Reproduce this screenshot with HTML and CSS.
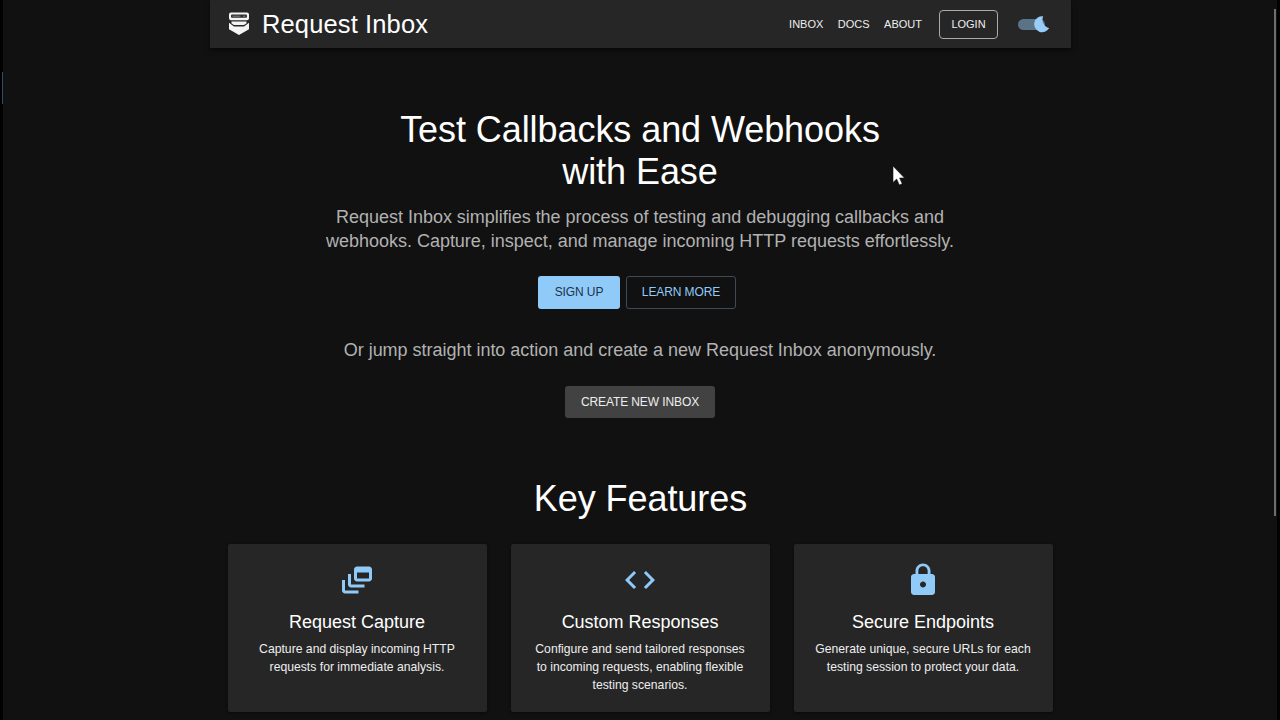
FILE: index.html
```html
<!DOCTYPE html>
<html lang="en">
<head>
    <meta charset="UTF-8">
    <meta name="viewport" content="width=device-width, initial-scale=1.0">
    <title>Request Inbox</title>
    <link rel="stylesheet" href="styles.css">
</head>
<body>
    <div class="container">
        <header class="navbar">
            <svg class="logo" viewBox="0 0 22 24">
                <path fill="#f4f4f4" d="M3 .5h16a2 2 0 0 1 2 2v3.700a2 2 0 0 1-2 2H3a2 2 0 0 1-2-2V2.500a2 2 0 0 1 2-2z"/>
                <rect x="3" y="2.600" width="16" height="3.200" rx="1" fill="#2b2b2b"/>
                <path stroke="#999" stroke-width=".8" d="M4.500 4.200h8M15 4.200h2.500"/>
                <path fill="#f4f4f4" d="M3.500 9.600h15v1.800c-1 .3-1.500 1.500-3 1.500h-9c-1.500 0-2-1.200-3-1.500z"/>
                <path fill="#f4f4f4" d="M1 10.800l5 3.700h10l5-3.700v6.400l-10 5.900-10-5.900z"/>
            </svg>
            <span class="brand">Request Inbox</span>
            <nav class="links">
                <a>INBOX</a>
                <a>DOCS</a>
                <a>ABOUT</a>
            </nav>
            <button class="login">LOGIN</button>
            <svg class="theme-switch" viewBox="0 0 34 18">
                <rect x="1" y="4" width="27" height="11" rx="5.500" fill="#5b7386"/>
                <path fill="#9accf9" d="M26.200 1.300a8 8 0 1 0 6 11.800A8.600 8.600 0 0 1 26.200 1.300z"/>
            </svg>
        </header>

        <main>
            <!-- Hero -->
            <section class="hero">
                <h1>Test Callbacks and Webhooks<br>with Ease</h1>
                <p class="lead">Request Inbox simplifies the process of testing and debugging callbacks and<br>webhooks. Capture, inspect, and manage incoming HTTP requests effortlessly.</p>
                <div class="actions">
                    <button class="btn btn-primary">SIGN UP</button>
                    <button class="btn btn-outlined">LEARN MORE</button>
                </div>
                <p class="lead">Or jump straight into action and create a new Request Inbox anonymously.</p>
                <button class="btn btn-grey">CREATE NEW INBOX</button>
            </section>

            <!-- Features -->
            <section class="features">
                <h2>Key Features</h2>
                <div class="cards">
                    <div class="card">
                        <svg class="card-icon" viewBox="0 0 24 24">
                            <path d="M8 8H6v7c0 1.100.9 2 2 2h9v-2H8V8z"/>
                            <path d="M20 3h-8c-1.100 0-2 .9-2 2v6c0 1.100.9 2 2 2h8c1.100 0 2-.9 2-2V5c0-1.100-.9-2-2-2zm0 8h-8V7h8v4z"/>
                            <path d="M4 12H2v7c0 1.100.9 2 2 2h9v-2H4v-7z"/>
                        </svg>
                        <h3>Request Capture</h3>
                        <p>Capture and display incoming HTTP<br>requests for immediate analysis.</p>
                    </div>
                    <div class="card">
                        <svg class="card-icon" viewBox="0 0 24 24">
                            <path d="M9.400 16.600L4.800 12l4.600-4.600L8 6l-6 6 6 6 1.400-1.400zm5.200 0l4.600-4.600-4.600-4.600L16 6l6 6-6 6-1.400-1.400z"/>
                        </svg>
                        <h3>Custom Responses</h3>
                        <p>Configure and send tailored responses<br>to incoming requests, enabling flexible<br>testing scenarios.</p>
                    </div>
                    <div class="card">
                        <svg class="card-icon" viewBox="0 0 24 24">
                            <path d="M18 8h-1V6c0-2.760-2.240-5-5-5S7 3.240 7 6v2H6c-1.100 0-2 .9-2 2v10c0 1.100.9 2 2 2h12c1.100 0 2-.9 2-2V10c0-1.100-.9-2-2-2zm-6 9c-1.100 0-2-.9-2-2s.9-2 2-2 2 .9 2 2-.9 2-2 2zm3.100-9H8.900V6c0-1.710 1.390-3.100 3.100-3.100s3.100 1.390 3.100 3.100v2z"/>
                        </svg>
                        <h3>Secure Endpoints</h3>
                        <p>Generate unique, secure URLs for each<br>testing session to protect your data.</p>
                    </div>
                </div>
            </section>
        </main>
    </div>

    <div class="edge-mark"></div>
    <div class="scroll-thumb"></div>
    <svg class="cursor" viewBox="0 0 14 22">
        <path fill="#fff" stroke="#111" stroke-width=".6" d="M1 1v16.500l3.700-3.400 2.600 5.900 2.900-1.300-2.600-5.700H12.500z"/>
    </svg>
</body>
</html>
```
FILE: styles.css
```css
* {
    margin: 0;
    padding: 0;
    box-sizing: border-box;
}

body {
    font-family: 'Liberation Sans', Arial, sans-serif;
    background-color: #111;
    color: #fff;
    height: 720px;
    overflow: hidden;
    border-left: 3px solid #000;
    border-right: 3px solid #000;
}

.container {
    width: 861px;
    margin: 0 auto 0 207px;
}

/* Top bar */
.navbar {
    display: flex;
    align-items: center;
    height: 48px;
    padding: 0 20px 0 18px;
    background-color: #262626;
    box-shadow: 0 2px 5px rgba(0, 0, 0, 0.6);
}

.logo {
    width: 22px;
    height: 24px;
}

.brand {
    margin-left: 12px;
    font-size: 25.5px;
    letter-spacing: 0.005em;
}

.links {
    display: flex;
    gap: 14.5px;
    margin-left: auto;
    font-size: 11px;
}

.links a,
.login {
    color: #eee;
}

.login {
    width: 59px;
    height: 29px;
    margin-left: 17px;
    background: none;
    border: 1px solid #aaa;
    border-radius: 4px;
    font-family: inherit;
    font-size: 11px;
}

.theme-switch {
    width: 34px;
    height: 18px;
    margin-left: 19px;
}

/* Hero */
.hero {
    display: flex;
    flex-direction: column;
    align-items: center;
    padding: 61px 1px 0 0;
    text-align: center;
}

h1,
h2 {
    font-size: 36px;
    font-weight: 400;
    line-height: 42px;
    letter-spacing: -0.07px;
}

.lead {
    margin-top: 12px;
    font-size: 18px;
    line-height: 24px;
    letter-spacing: -0.02px;
    color: #b2b2b2;
}

.actions {
    display: flex;
    gap: 6px;
    margin: 23px 6px 17px 0;
}

.btn {
    height: 33px;
    padding-bottom: 1px;
    border: none;
    border-radius: 3px;
    font-family: inherit;
    font-size: 12px;
    letter-spacing: -0.1px;
}

.btn-primary {
    width: 82px;
    background-color: #90caf9;
    color: #1c3349;
}

.btn-outlined {
    width: 110px;
    background: none;
    border: 1px solid #3f4a54;
    color: #90caf9;
}

.btn-grey {
    width: 150px;
    height: 32px;
    margin-top: 24px;
    background-color: #424242;
    color: #eee;
}

/* Features */
.features {
    padding: 60px 18px 0;
    text-align: center;
}

.cards {
    display: grid;
    grid-template-columns: repeat(3, 1fr);
    gap: 24px;
    margin-top: 24px;
}

.card {
    height: 168px;
    padding: 18px 1px 0 0;
    background-color: #262626;
    border-radius: 2px;
    box-shadow: 0 1px 3px rgba(0, 0, 0, 0.5);
}

.card-icon {
    display: block;
    width: 36px;
    height: 36px;
    margin: 0 auto;
    fill: #90caf9;
}

.card h3 {
    margin-top: 12px;
    font-size: 18px;
    font-weight: 400;
    line-height: 24px;
    letter-spacing: -0.02px;
}

.card p {
    margin-top: 6px;
    font-size: 12.2px;
    line-height: 18px;
    color: #eee;
}

/* Window edge, scrollbar and pointer sit over the page */
.edge-mark {
    position: absolute;
    left: 2px;
    top: 72px;
    width: 1px;
    height: 32px;
    background-color: #2f4a68;
}

.scroll-thumb {
    position: absolute;
    left: 1274px;
    top: 9px;
    width: 2px;
    height: 507px;
    background-color: #6e6e6e;
}

.cursor {
    position: absolute;
    left: 892px;
    top: 165px;
    width: 14px;
    height: 22px;
}
```
